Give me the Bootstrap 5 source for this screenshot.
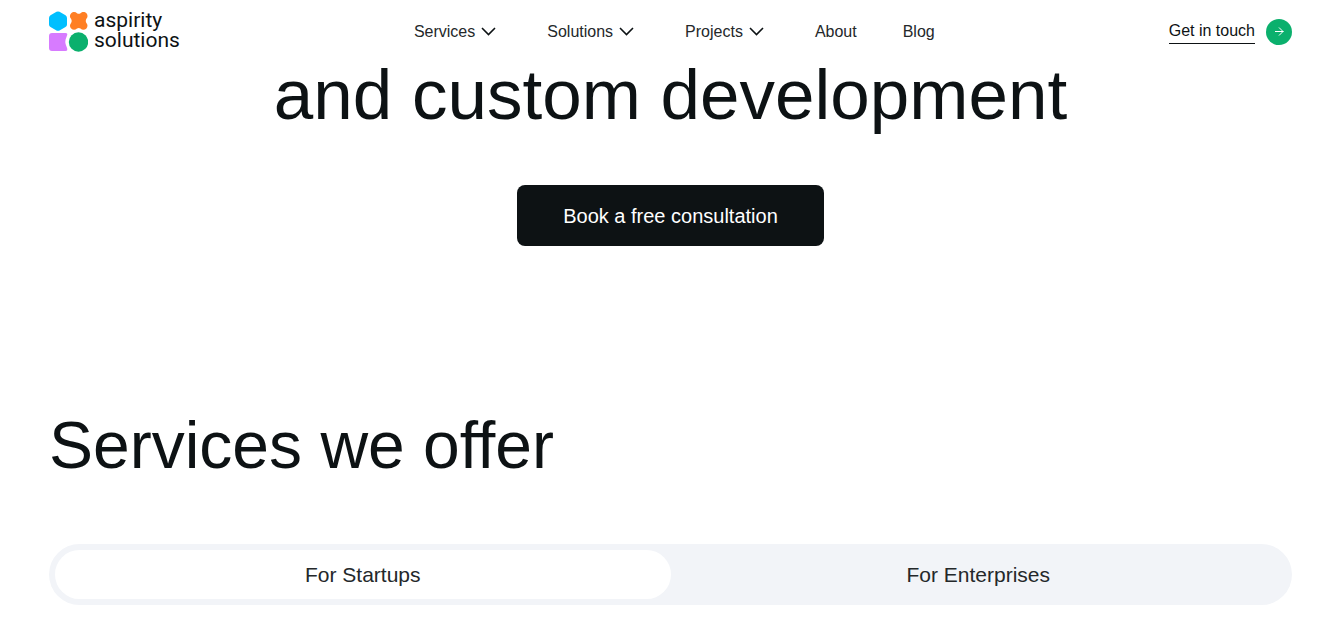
<!DOCTYPE html>
<html lang="en">
<head>
<meta charset="utf-8">
<meta name="viewport" content="width=device-width, initial-scale=1">
<title>Aspirity Solutions</title>
<link href="https://cdn.jsdelivr.net/npm/bootstrap@5.3.0/dist/css/bootstrap.min.css" rel="stylesheet">
<style>
  :root { --ink: #0d1214; --gutter: 49px; }
  body { font-family: "Liberation Sans", Arial, sans-serif; color: var(--ink); background: #fff; }
  .page-pad { padding-left: var(--gutter); padding-right: var(--gutter); }
  .site-header { height: 63px; background: #fff; }
  .brand-name { font-family: Roboto, sans-serif; font-size: 21px; line-height: 20px; padding-bottom: 4px; }
  .brand-link, .menu-item, .touch-link { color: var(--ink); text-decoration: none; }
  .brand-link { gap: 6px; }
  .menu { gap: 46px; }
  .menu-item { font-size: 16px; line-height: 24px; color: #24282a; gap: 6px; }
  button.menu-item { margin-right: 5px; }
  .touch-link { gap: 11px; font-size: 16px; line-height: 24px; }
  .touch-text { border-bottom: 1px solid var(--ink); }
  .hero-title { font-size: 71px; line-height: 64px; font-weight: 400; }
  .cta { width: 307px; height: 61px; border-radius: 8px; background: var(--ink); color: #fff; font-size: 20px; }
  .cta:hover { background: #24282a; color: #fff; }
  .hero { padding-bottom: 164px; }
  .hero-action { margin-top: 58px; }
  .offer-title { font-size: 66px; line-height: 70px; font-weight: 400; margin-bottom: 64px; }
  .switcher { background: #f2f4f8; border-radius: 31px; padding: 6px; margin-bottom: 22px; }
  .switch-tab { height: 49px; border-radius: 25px; font-size: 21px; color: #24282a; background: transparent; }
  .switch-tab.active { background: #fff; }
</style>
</head>
<body>
<header class="site-header page-pad sticky-top d-flex align-items-center justify-content-between">
  <a class="brand-link d-flex align-items-center" href="#">
    <svg width="39" height="41" viewBox="0 0 39 41" aria-hidden="true">
      <path d="M7.5.8Q9 0 10.500.8L16.500 4.300Q18 5.200 18 7V13.500Q18 15.200 16.500 16L10.500 19.400Q9 20.200 7.500 19.400L1.500 16Q0 15.200 0 13.500V7Q0 5.200 1.500 4.300Z" fill="#00bfff"/>
      <path d="M22 2.400C24 .4 26.500.6 28 2.200Q29.700 3.400 31.500 2.200C33.300.3 36 .6 37.500 2.300C39 4 38.900 6.400 37.200 8.100Q36.200 10 37.200 11.800C39 13.700 38.900 16 37.200 17.700C35.500 19.300 33.100 19.200 31.500 17.600Q29.700 16.600 28 17.600C26.200 19.200 23.900 19.300 22.200 17.600C20.600 16 20.600 13.600 22.200 11.800Q23.300 10 22.200 8.100C20.600 6.300 20.500 4 22 2.400Z" fill="#ff7f24"/>
      <path d="M3 22H16.500Q18.800 22 18.200 24L16.600 28.500Q16 31 16.600 33L18.200 37.500Q18.800 40 16.500 40H3Q0 40 0 37V25Q0 22 3 22Z" fill="#d77bff"/>
      <circle cx="29.500" cy="31" r="9.700" fill="#0bb06d"/>
    </svg>
    <span class="brand-name">aspirity<br>solutions</span>
  </a>
  <nav class="menu d-flex align-items-center" aria-label="Main">
    <button type="button" class="menu-item btn p-0 border-0 d-flex align-items-center">Services
      <svg width="15" height="9" viewBox="0 0 15 9" fill="none" stroke="#0d1214" stroke-width="1.600" aria-hidden="true"><path d="M1 1L7.500 7.500L14 1"/></svg>
    </button>
    <button type="button" class="menu-item btn p-0 border-0 d-flex align-items-center">Solutions
      <svg width="15" height="9" viewBox="0 0 15 9" fill="none" stroke="#0d1214" stroke-width="1.600" aria-hidden="true"><path d="M1 1L7.500 7.500L14 1"/></svg>
    </button>
    <button type="button" class="menu-item btn p-0 border-0 d-flex align-items-center">Projects
      <svg width="15" height="9" viewBox="0 0 15 9" fill="none" stroke="#0d1214" stroke-width="1.600" aria-hidden="true"><path d="M1 1L7.500 7.500L14 1"/></svg>
    </button>
    <a class="menu-item" href="#">About</a>
    <a class="menu-item" href="#">Blog</a>
  </nav>
  <a class="touch-link d-flex align-items-center" href="#">
    <span class="touch-text">Get in touch</span>
    <svg width="26" height="26" viewBox="0 0 26 26" fill="none" aria-hidden="true"><circle cx="13" cy="13" r="13" fill="#0bb06d"/><path d="M9 12.500H17.500M13 8.500L17 12.500L13 16.500" stroke="#fff"/></svg>
  </a>
</header>
<main>
  <section class="hero page-pad text-center">
    <h1 class="hero-title mb-0">and custom development</h1>
    <div class="hero-action"><button type="button" class="cta btn border-0">Book a free consultation</button></div>
  </section>
  <section class="page-pad">
    <h2 class="offer-title">Services we offer</h2>
    <div class="switcher d-flex" role="tablist">
      <button type="button" role="tab" aria-selected="true" class="switch-tab active border-0 flex-fill w-50">For Startups</button>
      <button type="button" role="tab" aria-selected="false" class="switch-tab border-0 flex-fill w-50">For Enterprises</button>
    </div>
  </section>
</main>
<script src="https://cdn.jsdelivr.net/npm/bootstrap@5.3.0/dist/js/bootstrap.bundle.min.js"></script>
</body>
</html>
